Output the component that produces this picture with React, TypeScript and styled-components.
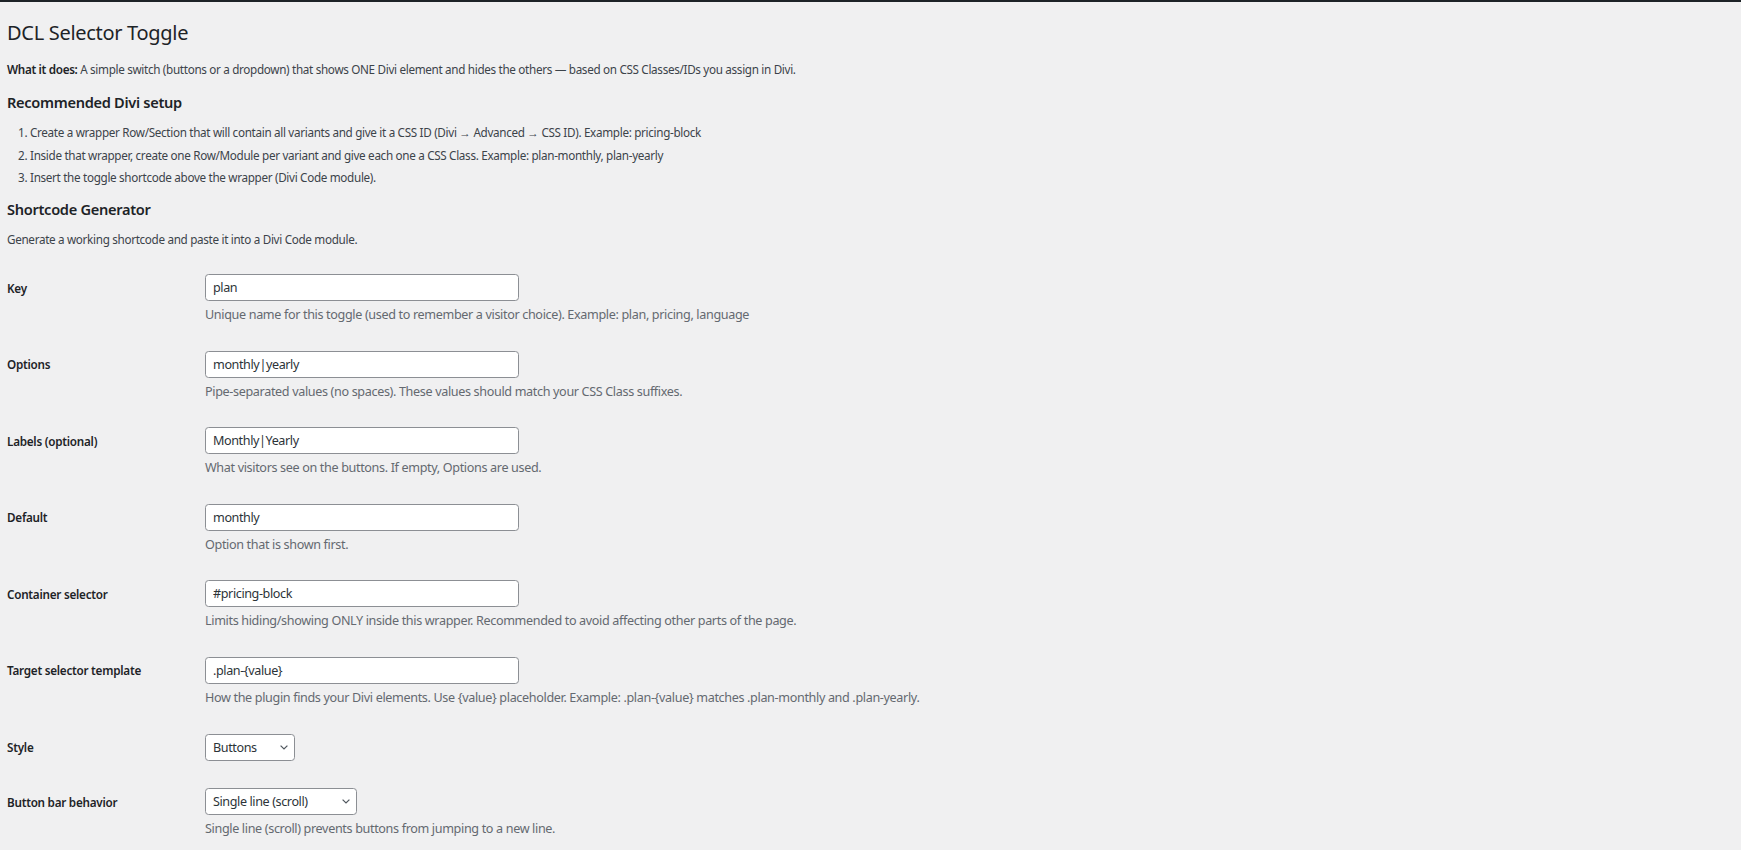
import React from "react";
import styled, { createGlobalStyle } from "styled-components";

const GlobalStyle = createGlobalStyle`
  html, body {
    margin: 0;
    padding: 0;
    background: #f0f0f1;
  }
  body {
    font-family: "Noto Sans", "Segoe UI", sans-serif;
    color: #3c434a;
    font-size: 11.7px;
  }
`;

interface Field {
    label: string
    value: string
    description?: string
    kind: "text" | "select"
    width?: number
}

const fields: Field[] = [
    {
        label: "Key",
        value: "plan",
        kind: "text",
        description: "Unique name for this toggle (used to remember a visitor choice). Example: plan, pricing, language",
    },
    {
        label: "Options",
        value: "monthly|yearly",
        kind: "text",
        description: "Pipe-separated values (no spaces). These values should match your CSS Class suffixes.",
    },
    {
        label: "Labels (optional)",
        value: "Monthly|Yearly",
        kind: "text",
        description: "What visitors see on the buttons. If empty, Options are used.",
    },
    {
        label: "Default",
        value: "monthly",
        kind: "text",
        description: "Option that is shown first.",
    },
    {
        label: "Container selector",
        value: "#pricing-block",
        kind: "text",
        description: "Limits hiding/showing ONLY inside this wrapper. Recommended to avoid affecting other parts of the page.",
    },
    {
        label: "Target selector template",
        value: ".plan-{value}",
        kind: "text",
        description: "How the plugin finds your Divi elements. Use {value} placeholder. Example: .plan-{value} matches .plan-monthly and .plan-yearly.",
    },
    { label: "Style", value: "Buttons", kind: "select", width: 90 },
    {
        label: "Button bar behavior",
        value: "Single line (scroll)",
        kind: "select",
        width: 152,
        description: "Single line (scroll) prevents buttons from jumping to a new line.",
    },
];

const steps = [
    "Create a wrapper Row/Section that will contain all variants and give it a CSS ID (Divi \u2192 Advanced \u2192 CSS ID). Example: pricing-block",
    "Inside that wrapper, create one Row/Module per variant and give each one a CSS Class. Example: plan-monthly, plan-yearly",
    "Insert the toggle shortcode above the wrapper (Divi Code module).",
];

//STYLED COMPONENTS:
const Page = styled.div`
    border-top: 2px solid #1d2327;
    padding: 0 7px;
    min-height: 848px;
`

const Title = styled.h1`
    margin: 17px 0 0;
    font-size: 20px;
    line-height: 27px;
    font-weight: 400;
    color: #1d2327;
    letter-spacing: -0.3px;
`

const Paragraph = styled.p<{ $top: number }>`
    margin: ${p => p.$top}px 0 0;
    line-height: 17.5px;
    letter-spacing: -0.32px;
`

const SectionTitle = styled.h2<{ $top: number }>`
    margin: ${p => p.$top}px 0 0;
    font-size: 14.6px;
    line-height: 20px;
    font-weight: 600;
    color: #1d2327;
    letter-spacing: -0.3px;
`

const Steps = styled.ol`
    margin: 12px 0 0 23px;
    padding: 0;
    display: flex;
    flex-direction: column;
    gap: 5px;
`

const Step = styled.li`
    line-height: 17.5px;
    letter-spacing: -0.32px;
`

const FormTable = styled.div`
    margin-top: 12px;
    display: flex;
    flex-direction: column;
`

const Row = styled.div<{ $hasDescription: boolean }>`
    display: grid;
    grid-template-columns: 198px 1fr;
    padding: 14px 0 ${p => (p.$hasDescription ? 12.6 : 13.8)}px;
`

const Label = styled.label`
    height: 27px;
    display: flex;
    align-items: center;
    font-weight: 600;
    color: #1d2327;
    letter-spacing: -0.25px;
`

const Cell = styled.div`
    display: flex;
    flex-direction: column;
    align-items: flex-start;
`

const TextInput = styled.input`
    box-sizing: border-box;
    width: 314px;
    height: 27px;
    margin: 0;
    padding: 0 7px;
    border: 1px solid #8c8f94;
    border-radius: 3.6px;
    background: #fff;
    font-family: inherit;
    font-size: 12.6px;
    color: #2c3338;
    letter-spacing: -0.4px;
    outline: none;
`

const SelectWrap = styled.div`
    position: relative;
    display: inline-flex;
`

const Select = styled.select<{ $width: number }>`
    box-sizing: border-box;
    width: ${p => p.$width}px;
    height: 27px;
    margin: 0;
    padding: 0 22px 0 7px;
    border: 1px solid #8c8f94;
    border-radius: 3.6px;
    background: #fff;
    appearance: none;
    font-family: inherit;
    font-size: 12.6px;
    color: #2c3338;
    letter-spacing: -0.4px;
    outline: none;
`

const Chevron = styled.svg`
    position: absolute;
    right: 7px;
    top: 11px;
    pointer-events: none;
`

const Description = styled.p`
    margin: 4px 0 0;
    font-size: 12.6px;
    line-height: 19px;
    color: #646970;
    letter-spacing: -0.35px;
`

const Strong = styled.strong`
    font-weight: 600;
    color: #1d2327;
`

const App = () => {
    return (
        <Page>
            <GlobalStyle />
            <Title>DCL Selector Toggle</Title>
            <Paragraph $top={15}>
                <Strong>What it does:</Strong> A simple switch (buttons or a dropdown) that shows ONE Divi element and hides the others — based on CSS Classes/IDs you assign in Divi.
            </Paragraph>

            <SectionTitle $top={13.5}>Recommended Divi setup</SectionTitle>
            <Steps>
                {steps.map(step => (
                    <Step key={step}>{step}</Step>
                ))}
            </Steps>

            <SectionTitle $top={12}>Shortcode Generator</SectionTitle>
            <Paragraph $top={12}>Generate a working shortcode and paste it into a Divi Code module.</Paragraph>

            <FormTable>
                {fields.map(field => (
                    <Row key={field.label} $hasDescription={!!field.description}>
                        <Label>{field.label}</Label>
                        <Cell>
                            {field.kind === "text" ? (
                                <TextInput defaultValue={field.value} />
                            ) : (
                                <SelectWrap>
                                    <Select $width={field.width || 100} defaultValue={field.value}>
                                        <option>{field.value}</option>
                                    </Select>
                                    <Chevron width="8" height="5" viewBox="0 0 8 5">
                                        <path d="M0.6 0.6 L4 4 L7.4 0.6" fill="none" stroke="#50575e" strokeWidth="1.2" />
                                    </Chevron>
                                </SelectWrap>
                            )}
                            {field.description && <Description>{field.description}</Description>}
                        </Cell>
                    </Row>
                ))}
            </FormTable>
        </Page>
    )
}

export default App
